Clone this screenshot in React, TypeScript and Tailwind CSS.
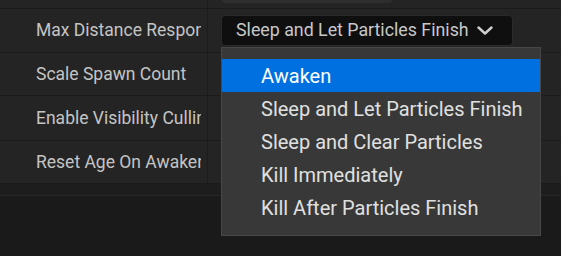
const rows = [
  { label: "Max Distance Response", h: "h-[44px]", dropdown: true },
  { label: "Scale Spawn Count", h: "h-[43px]" },
  { label: "Enable Visibility Culling", h: "h-[45px]" },
  { label: "Reset Age On Awaken", h: "h-[43px]" },
];

const options = [
  "Awaken",
  "Sleep and Let Particles Finish",
  "Sleep and Clear Particles",
  "Kill Immediately",
  "Kill After Particles Finish",
];

function Chevron() {
  return (
    <svg width="16" height="9" viewBox="0 0 16 9" className="ml-[8px]">
      <path
        d="M1.5 1.5 L8 7.5 L14.5 1.5"
        fill="none"
        stroke="#d0d0d0"
        strokeWidth="2.4"
        strokeLinecap="round"
        strokeLinejoin="round"
      />
    </svg>
  );
}

export default function App() {
  return (
    <div
      className="relative h-[256px] w-[561px] overflow-hidden bg-[#1a1a1a]"
      style={{ fontFamily: "Roboto, 'Noto Sans', sans-serif" }}
    >
      {/* bottom of the row above */}
      <div className="flex h-[9px] border-b border-[#1b1b1b] bg-[#242424]">
        <div className="w-[208px] border-r border-[#1c1c1c]" />
        <div className="flex-1 pl-[14px]">
          <div className="h-[3px] w-[170px] rounded-b-[4px] bg-[#2e2e2e]" />
        </div>
      </div>

      {rows.map((r) => (
        <div
          key={r.label}
          className={`flex ${r.h} border-b border-[#1b1b1b] bg-[#242424]`}
        >
          <div className="flex w-[208px] items-center overflow-hidden border-r border-[#1c1c1c] pl-[36px]">
            <span className="block w-[165px] overflow-hidden whitespace-nowrap text-[17.5px] text-[#c4c4c4]">
              {r.label}
            </span>
          </div>
          <div className="flex flex-1 items-center pl-[13px]">
            {r.dropdown && (
              <div className="flex h-[31px] w-[292px] items-center rounded-[4px] border border-[#2a2a2a] bg-[#0f0f0f] pl-[14px] text-[17.8px] text-[#c8c8c8]">
                <span>Sleep and Let Particles Finish</span>
                <Chevron />
              </div>
            )}
          </div>
        </div>
      ))}

      <div className="h-[12px] border-b border-[#262626] bg-[#1d1d1d]" />

      {/* open dropdown menu */}
      <div className="absolute left-[221px] top-[47px] w-[320px] border border-[#474747] bg-[#383838] pb-[11px] pt-[11px]">
        {options.map((o, i) => (
          <div
            key={o}
            className={`flex h-[33px] items-center pl-[39px] text-[20px] ${
              i === 0 ? "bg-[#0070e0] text-white" : "text-[#e0e0e0]"
            }`}
          >
            {o}
          </div>
        ))}
      </div>
    </div>
  );
}
